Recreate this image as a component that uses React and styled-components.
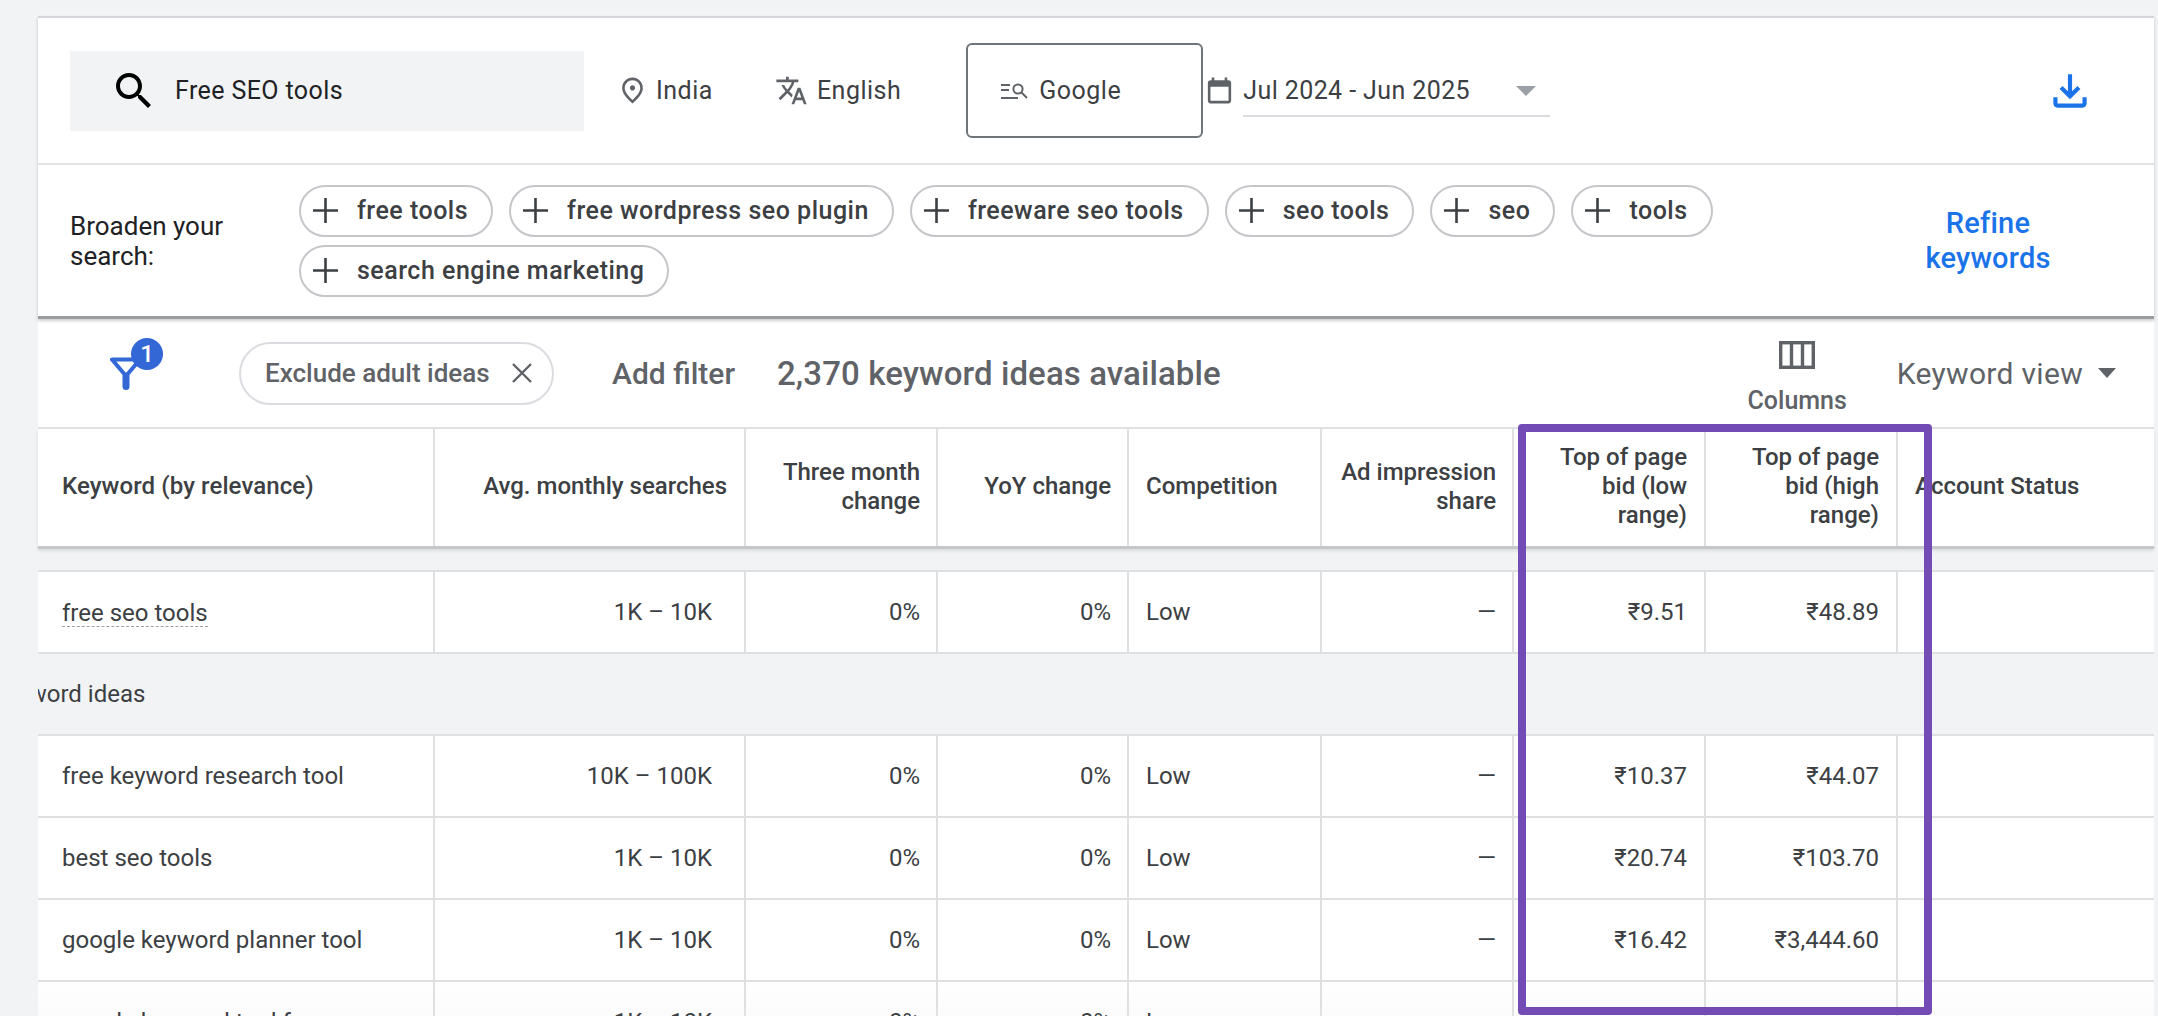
import React from 'react';
import styled, { createGlobalStyle } from 'styled-components';

const GlobalStyle = createGlobalStyle`
	html, body {
		margin: 0;
		padding: 0;
		background: #f1f3f4;
		font-family: Roboto, "Liberation Sans", sans-serif;
		color: #3c4043;
	}
	* {
		box-sizing: border-box;
	}
`;

const COLUMNS = '397px 311px 192px 191px 193px 192px 192px 192px 1fr';

const Page = styled.div`
	position: relative;
	width: 2158px;
	height: 1016px;
	overflow: hidden;
	padding: 16px 4px 0 38px;
`;

const TopPanel = styled.div`
	background: #fff;
	border-top: 2px solid #d3d5d8;
	border-bottom: 3px solid #9b9d9f;
	box-shadow: 0 2px 3px rgba(60, 64, 67, 0.25);
	position: relative;
`;

const SearchBar = styled.div`
	height: 147px;
	display: flex;
	align-items: center;
	padding: 0 59px 0 32px;
	border-bottom: 2px solid #e3e4e6;
`;

const SearchBox = styled.div`
	width: 514px;
	height: 80px;
	background: #f1f3f4;
	display: flex;
	align-items: center;
	gap: 17px;
	padding-left: 40px;
	font-size: 25px;
	letter-spacing: 0.4px;
	color: #202124;
`;

const Option = styled.div`
	display: flex;
	align-items: center;
	gap: ${(p) => p.$gap || 10}px;
	margin-left: ${(p) => p.$left || 0}px;
	font-size: 25px;
	letter-spacing: 0.5px;
	color: #3c4043;
`;

const NetworkBox = styled.div`
	width: 237px;
	height: 95px;
	margin-left: 65px;
	border: 2px solid #70757a;
	border-radius: 6px;
	display: flex;
	align-items: center;
	gap: 11px;
	padding-left: 33px;
	font-size: 25px;
	letter-spacing: 0.5px;
	color: #3c4043;
`;

const DateWrap = styled.div`
	display: flex;
	align-items: center;
	gap: 8px;
	margin-left: 1px;
`;

const DateSelect = styled.div`
	width: 307px;
	height: 50px;
	display: flex;
	align-items: center;
	justify-content: space-between;
	padding: 0 14px 0 0;
	margin-top: 2px;
	border-bottom: 2px solid #dadce0;
	font-size: 25px;
	letter-spacing: 0.4px;
	color: #3c4043;
`;

const Arrow = styled.span`
	display: block;
	width: 0;
	height: 0;
	border-left: ${(p) => p.$w || 10}px solid transparent;
	border-right: ${(p) => p.$w || 10}px solid transparent;
	border-top: ${(p) => p.$h || 10}px solid ${(p) => p.$color || '#9aa0a6'};
`;

const DownloadButton = styled.div`
	margin-left: auto;
	display: flex;
`;

const BroadenRow = styled.div`
	height: 151px;
	display: flex;
	align-items: center;
	padding: 0 91px 0 32px;
`;

const BroadenLabel = styled.div`
	width: 229px;
	flex: none;
	font-size: 26px;
	line-height: 30px;
	color: #202124;
`;

const Chips = styled.div`
	width: 1460px;
	display: flex;
	flex-wrap: wrap;
	gap: 8px 16px;
`;

const Chip = styled.div`
	height: 52px;
	display: flex;
	align-items: center;
	gap: 19px;
	padding: 0 23px 0 12px;
	border: 2px solid #c4c6c9;
	border-radius: 26px;
	font-size: 25px;
	font-weight: 500;
	letter-spacing: 0.5px;
	color: #3c4043;
`;

const RefineLink = styled.div`
	margin-left: auto;
	width: 150px;
	text-align: center;
	font-size: 29px;
	font-weight: 500;
	line-height: 35px;
	letter-spacing: 0.2px;
	color: #1a73e8;
`;

const Toolbar = styled.div`
	height: 110px;
	background: #fff;
	display: flex;
	align-items: center;
	padding: 0 38px 0 72px;
	border-bottom: 2px solid #e0e1e3;
`;

const FilterButton = styled.div`
	position: relative;
	width: 24px;
	height: 33px;
	display: flex;
`;

const Badge = styled.span`
	position: absolute;
	left: 21px;
	top: -19px;
	width: 32px;
	height: 32px;
	border-radius: 50%;
	background: #3367d6;
	color: #fff;
	font-size: 24px;
	font-weight: 500;
	display: flex;
	align-items: center;
	justify-content: center;
`;

const FilterChip = styled.div`
	width: 315px;
	height: 63px;
	margin-left: 105px;
	display: flex;
	align-items: center;
	justify-content: space-between;
	padding: 0 20px 0 24px;
	border: 2px solid #dadce0;
	border-radius: 32px;
	font-size: 26px;
	font-weight: 500;
	color: #5f6368;
`;

const AddFilter = styled.div`
	margin-left: 58px;
	font-size: 30px;
	font-weight: 500;
	color: #5f6368;
`;

const IdeasCount = styled.div`
	margin-left: 42px;
	font-size: 33px;
	font-weight: 500;
	letter-spacing: 0.1px;
	color: #5f6368;
`;

const ColumnsButton = styled.div`
	margin-left: auto;
	display: flex;
	flex-direction: column;
	align-items: center;
	gap: 17px;
	margin-top: 10px;
	font-size: 25px;
	font-weight: 500;
	color: #5f6368;
`;

const ViewSelect = styled.div`
	margin-left: 50px;
	display: flex;
	align-items: center;
	gap: 15px;
	font-size: 30px;
	letter-spacing: 0.3px;
	color: #5f6368;
`;

const Row = styled.div`
	display: grid;
	grid-template-columns: ${COLUMNS};
	height: ${(p) => (p.$top ? 84 : 82)}px;
	background: ${(p) => (p.$fade ? 'linear-gradient(#fff, #f6f6f7)' : '#fff')};
	border-bottom: 2px solid #dfe0e2;
	border-top: ${(p) => (p.$top ? '2px solid #dfe0e2' : 'none')};
`;

const HeadRow = styled(Row)`
	height: 120px;
	border-bottom: 3px solid #c5c7ca;
	box-shadow: 0 2px 3px rgba(60, 64, 67, 0.12);
	position: relative;
`;

const Cell = styled.div`
	display: flex;
	align-items: center;
	justify-content: ${(p) => (p.$right ? 'flex-end' : 'flex-start')};
	text-align: ${(p) => (p.$right ? 'right' : 'left')};
	padding: ${(p) => (p.$right ? `0 ${p.$pad || 17}px 0 ${p.$narrow ? 38 : 0}px` : `0 0 0 ${p.$pad || 17}px`)};
	padding-bottom: ${(p) => (p.$head ? 2 : 0)}px;
	border-right: ${(p) => (p.$last ? 'none' : '2px solid #dfe0e2')};
	font-size: 24px;
	line-height: 29px;
	font-weight: ${(p) => (p.$head ? 500 : 400)};
	letter-spacing: ${(p) => (p.$wide ? 0.1 : 0)}px;
	color: #3c4043;
	white-space: ${(p) => (p.$head ? 'normal' : 'nowrap')};
`;

const DottedKeyword = styled.span`
	border-bottom: 1px dashed #9aa0a6;
	line-height: 26px;
	margin-top: 2px;
`;

const HeadGap = styled.div`
	height: 21px;
`;

const SectionRow = styled.div`
	height: 80px;
	display: flex;
	align-items: center;
	overflow: hidden;
	font-size: 24px;
	color: #3c4043;
`;

const SectionTitle = styled.span`
	margin-left: -48px;
	white-space: nowrap;
`;

const Highlight = styled.div`
	position: absolute;
	left: 1518px;
	top: 424px;
	width: 414px;
	height: 591px;
	border: 8px solid #724cb4;
	border-radius: 4px;
	pointer-events: none;
`;

const SearchIcon = () => (
	<svg width="48" height="48" viewBox="0 0 24 24" fill="#000">
		<path d="M15.5 14h-.79l-.28-.27C15.41 12.59 16 11.11 16 9.5 16 5.91 13.09 3 9.5 3S3 5.91 3 9.5 5.91 16 9.5 16c1.61 0 3.09-.59 4.23-1.57l.27.28v.79l5 4.99L20.49 19l-4.99-5zm-6 0C7.01 14 5 11.99 5 9.5S7.01 5 9.5 5 14 7.01 14 9.5 11.99 14 9.5 14z" />
	</svg>
);

const PinIcon = () => (
	<svg width="31" height="31" viewBox="0 0 24 24" fill="#5f6368">
		<path d="M12 12c-1.1 0-2-.9-2-2s.9-2 2-2 2 .9 2 2-.9 2-2 2zm6-1.8C18 6.57 15.35 4 12 4s-6 2.57-6 6.2c0 2.34 1.95 5.44 6 9.14 4.05-3.7 6-6.8 6-9.14zM12 2c4.2 0 8 3.22 8 8.2 0 3.32-2.67 7.25-8 11.8-5.33-4.55-8-8.48-8-11.8C4 5.22 7.8 2 12 2z" />
	</svg>
);

const TranslateIcon = () => (
	<svg width="33" height="33" viewBox="0 0 24 24" fill="#5f6368">
		<path d="m12.87 15.07-2.54-2.51.03-.03c1.74-1.94 2.98-4.17 3.71-6.53H17V4h-7V2H8v2H1v1.99h11.17C11.5 7.92 10.44 9.75 9 11.35 8.07 10.32 7.3 9.19 6.69 8h-2c.73 1.63 1.73 3.17 2.98 4.56l-5.09 5.02L4 19l5-5 3.11 3.11.76-2.04zM18.5 10h-2L12 22h2l1.12-3h4.75L21 22h2l-4.5-12zm-2.62 7 1.62-4.33L19.12 17h-3.24z" />
	</svg>
);

const NetworkIcon = () => (
	<svg width="27" height="16" viewBox="0 0 27 16" fill="none" stroke="#5f6368" strokeWidth="2">
		<path d="M0 2h9M0 7h8M0 15h17" />
		<circle cx="17" cy="6" r="4.6" />
		<path d="M20.5 9.5l5.5 5.5" />
	</svg>
);

const CalendarIcon = () => (
	<svg width="31" height="31" viewBox="0 0 24 24" fill="#5f6368">
		<path d="M19 4h-1V2h-2v2H8V2H6v2H5c-1.1 0-2 .9-2 2v14c0 1.1.9 2 2 2h14c1.1 0 2-.9 2-2V6c0-1.1-.9-2-2-2zm0 16H5V9h14v11z" />
	</svg>
);

const DownloadIcon = () => (
	<svg width="50" height="50" viewBox="0 0 24 24" fill="#1a73e8">
		<path d="M18 15v3H6v-3H4v3c0 1.1.9 2 2 2h12c1.1 0 2-.9 2-2v-3h-2zm-1-4-1.41-1.41L13 12.17V4h-2v8.17L8.41 9.59 7 11l5 5 5-5z" />
	</svg>
);

const PlusIcon = () => (
	<svg width="25" height="25" viewBox="0 0 25 25" stroke="#3c4043" strokeWidth="2.6">
		<path d="M12.5 0v25M0 12.5h25" />
	</svg>
);

const CloseIcon = () => (
	<svg width="20" height="20" viewBox="0 0 20 20" stroke="#5f6368" strokeWidth="2.4">
		<path d="M1 1l18 18M19 1L1 19" />
	</svg>
);

const FunnelIcon = () => (
	<svg width="32" height="33" viewBox="0 0 32 33" fill="none" stroke="#3367d6" strokeLinecap="round" strokeLinejoin="round" style={{ flex: 'none' }}>
		<path d="M2 2.5h28L16 19z" strokeWidth="4" />
		<path d="M16 19v10.5" strokeWidth="7" />
	</svg>
);

const ColumnsIcon = () => (
	<svg width="36" height="28" viewBox="0 0 36 28" fill="none" stroke="#5f6368" strokeWidth="3.4">
		<rect x="1.7" y="1.7" width="32.6" height="24.6" />
		<path d="M12.5 2v24M23.5 2v24" />
	</svg>
);

const broaden = [
	'free tools',
	'free wordpress seo plugin',
	'freeware seo tools',
	'seo tools',
	'seo',
	'tools',
	'search engine marketing'
];

const headers = [
	{ label: 'Keyword (by relevance)', pad: 24, wide: true },
	{ label: 'Avg. monthly searches', right: true },
	{ label: 'Three month change', right: true, pad: 16 },
	{ label: 'YoY change', right: true, pad: 16 },
	{ label: 'Competition' },
	{ label: 'Ad impression share', right: true, pad: 16 },
	{ label: 'Top of page bid (low range)', right: true, narrow: true },
	{ label: 'Top of page bid (high range)', right: true, narrow: true },
	{ label: 'Account Status', last: true }
];

const KeywordRow = ({ keyword, volume, low, high, dotted, top, fade }) => (
	<Row $top={top} $fade={fade}>
		<Cell $pad={24}>{dotted ? <DottedKeyword>{keyword}</DottedKeyword> : keyword}</Cell>
		<Cell $right $pad={32}>{volume}</Cell>
		<Cell $right $pad={16}>0%</Cell>
		<Cell $right $pad={16}>0%</Cell>
		<Cell>Low</Cell>
		<Cell $right $pad={16}>—</Cell>
		<Cell $right>{low}</Cell>
		<Cell $right>{high}</Cell>
		<Cell $last />
	</Row>
);

const App = () => (
	<Page>
		<GlobalStyle />
		<TopPanel>
			<SearchBar>
				<SearchBox>
					<SearchIcon />
					Free SEO tools
				</SearchBox>
				<Option $left={33} $gap={8}>
					<PinIcon />
					India
				</Option>
				<Option $left={62} $gap={9}>
					<TranslateIcon />
					English
				</Option>
				<NetworkBox>
					<NetworkIcon />
					Google
				</NetworkBox>
				<DateWrap>
					<CalendarIcon />
					<DateSelect>
						Jul 2024 - Jun 2025
						<Arrow />
					</DateSelect>
				</DateWrap>
				<DownloadButton>
					<DownloadIcon />
				</DownloadButton>
			</SearchBar>
			<BroadenRow>
				<BroadenLabel>Broaden your search:</BroadenLabel>
				<Chips>
					{broaden.map((item) => (
						<Chip key={item}>
							<PlusIcon />
							{item}
						</Chip>
					))}
				</Chips>
				<RefineLink>Refine keywords</RefineLink>
			</BroadenRow>
		</TopPanel>
		<Toolbar>
			<FilterButton>
				<FunnelIcon />
				<Badge>1</Badge>
			</FilterButton>
			<FilterChip>
				Exclude adult ideas
				<CloseIcon />
			</FilterChip>
			<AddFilter>Add filter</AddFilter>
			<IdeasCount>2,370 keyword ideas available</IdeasCount>
			<ColumnsButton>
				<ColumnsIcon />
				Columns
			</ColumnsButton>
			<ViewSelect>
				Keyword view
				<Arrow $w={9.5} $h={10} $color="#5f6368" />
			</ViewSelect>
		</Toolbar>
		<HeadRow>
			{headers.map((h) => (
				<Cell key={h.label} $head $right={h.right} $last={h.last} $narrow={h.narrow} $pad={h.pad} $wide={h.wide}>
					{h.label}
				</Cell>
			))}
		</HeadRow>
		<HeadGap />
		<KeywordRow top dotted keyword="free seo tools" volume="1K – 10K" low="₹9.51" high="₹48.89" />
		<SectionRow>
			<SectionTitle>Keyword ideas</SectionTitle>
		</SectionRow>
		<KeywordRow top keyword="free keyword research tool" volume="10K – 100K" low="₹10.37" high="₹44.07" />
		<KeywordRow keyword="best seo tools" volume="1K – 10K" low="₹20.74" high="₹103.70" />
		<KeywordRow keyword="google keyword planner tool" volume="1K – 10K" low="₹16.42" high="₹3,444.60" />
		<KeywordRow fade keyword="google keyword tool free" volume="1K – 10K" low="" high="" />
		<Highlight />
	</Page>
);

export default App;
